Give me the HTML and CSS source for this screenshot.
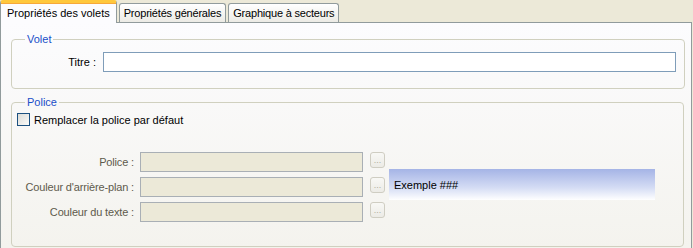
FILE: index.html
```html
<!DOCTYPE html>
<html lang="fr">
<head>
    <meta charset="UTF-8">
    <title>Propriétés</title>
    <link rel="stylesheet" href="styles.css">
</head>
<body>
    <!-- onglets -->
    <div class="tabs">
        <div class="tab active">Propriétés des volets</div>
        <div class="tab">Propriétés générales</div>
        <div class="tab">Graphique à secteurs</div>
    </div>

    <div class="panel">
        <fieldset class="group group-volet">
            <legend>Volet</legend>
            <div class="title-row">
                <label class="label">Titre :</label>
                <input type="text" class="textbox">
            </div>
        </fieldset>

        <fieldset class="group group-police">
            <legend>Police</legend>
            <label class="check-row">
                <span class="checkbox"></span>
                Remplacer la police par défaut
            </label>
            <div class="font-grid">
                <span class="label disabled">Police :</span>
                <span class="textbox off"></span>
                <span class="dots">...</span>

                <span class="label disabled">Couleur d'arrière-plan :</span>
                <span class="textbox off"></span>
                <span class="dots">...</span>

                <span class="label disabled">Couleur du texte :</span>
                <span class="textbox off"></span>
                <span class="dots">...</span>

                <div class="sample">Exemple ###</div>
            </div>
        </fieldset>
    </div>
</body>
</html>
```

FILE: styles.css
```css
/* base */
body {
    margin: 0;
    background-color: #ece9d8;
    font-family: "Liberation Sans", Arial, sans-serif;
    font-size: 11px;
    color: #000;
    overflow: hidden;
}

/* onglets */
.tabs {
    display: flex;
    align-items: flex-end;
    height: 22px;
    gap: 2px;
}

.tab {
    height: 18px;
    line-height: 18px;
    padding: 0 4px;
    border: 1px solid #919b9c;
    border-bottom: none;
    border-radius: 3px 3px 0 0;
    background: linear-gradient(#ffffff, #ecebe5);
    letter-spacing: -0.2px;
}

.tab.active {
    position: relative;
    z-index: 1;
    height: 20px;
    line-height: 20px;
    padding: 0 6px 0 6px;
    margin-bottom: -1px;
    border-top: 3px solid #ffc83c;
    background: #fcfcfe;
    box-shadow: inset 0 1px 0 #f7a83a;
    letter-spacing: 0;
}

/* panneau */
.panel {
    box-sizing: border-box;
    height: 226px;
    margin-right: 1px;
    border: 1px solid #919b9c;
    border-bottom: none;
    background: linear-gradient(#fcfcfe, #f4f3ee);
    padding: 10px 7px 0 10px;
}

.group {
    margin: 0;
    border: 1px solid #d0d0bf;
    border-radius: 4px;
    padding: 0 8px;
}

.group legend {
    color: #1a4fc8;
    padding: 0 2px;
    margin-left: 5px;
    line-height: 13px;
}

.group-volet {
    height: 54px;
}

.group-police {
    margin-top: 7px;
    height: 149px;
}

.label {
    text-align: right;
    white-space: nowrap;
}

.disabled {
    color: #5e5a4c;
    letter-spacing: -0.15px;
}

.title-row {
    display: grid;
    grid-template-columns: 76px 1fr;
    gap: 7px;
    align-items: center;
    margin-top: 6px;
}

.textbox {
    display: block;
    box-sizing: border-box;
    height: 20px;
    border: 1px solid #7f9db9;
    background: #fff;
    margin: 0;
    padding: 0 3px;
    font: inherit;
    width: 573px;
}

.textbox.off {
    background: #ece9d8;
    border-color: #a9afb5;
}

.check-row {
    display: flex;
    align-items: center;
    gap: 4px;
    margin: 4px 0 0 -3px;
    height: 13px;
}

.checkbox {
    width: 11px;
    height: 11px;
    border: 1px solid #1c5180;
    background: linear-gradient(135deg, #dcdcd7, #fbfbf9);
}

.font-grid {
    display: grid;
    grid-template-columns: 114px 223px 14px 266px;
    grid-template-rows: 20px 20px 20px;
    column-gap: 6px;
    row-gap: 5px;
    align-items: center;
    margin-top: 26px;
}

.font-grid .textbox.off {
    width: auto;
}

.dots {
    box-sizing: border-box;
    width: 15px;
    height: 16px;
    margin-left: 1px;
    border: 1px solid #cfcdc2;
    border-radius: 3px;
    background: linear-gradient(#f8f8f5, #ecebe6);
    color: #b0ad9f;
    font-size: 9px;
    line-height: 15px;
    text-align: center;
    align-self: start;
}

.sample {
    grid-column: 4;
    grid-row: 1 / 4;
    height: 31px;
    line-height: 33px;
    padding-left: 5px;
    margin-top: -6px;
    background: linear-gradient(#a5b4e6, #d4dcf4 60%, #ffffff);
}
```
